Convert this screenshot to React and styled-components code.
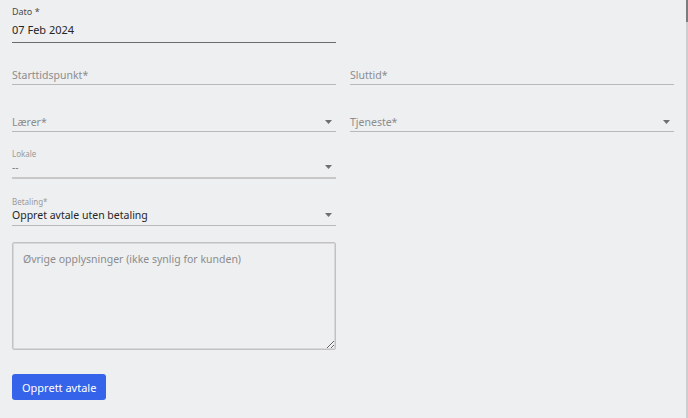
import React from "react";
import styled, { createGlobalStyle } from "styled-components";

const GlobalStyle = createGlobalStyle`
    html, body {
        margin: 0;
        padding: 0;
        background: #eeeff1;
    }
    body {
        font-family: "Noto Sans", "DejaVu Sans", sans-serif;
        color: #2b2b2b;
    }
`;

function Arrow() {
    return (
        <Caret width="7" height="4" viewBox="0 0 7 4">
            <path d="M0 0h7L3.5 4z" fill="#6f6f6f" />
        </Caret>
    );
}

function App() {
    return (
        <>
            <GlobalStyle />
            <Page>
                <Grid>
                    <Row $h={38}>
                        <Field>
                            <Label $dark>Dato *</Label>
                            <Control $dark $lh={22} $pb={1}>
                                <Value>07 Feb 2024</Value>
                            </Control>
                        </Field>
                        <div />
                    </Row>
                    <Row $h={42}>
                        <Field>
                            <Control $lh={18}>
                                <Placeholder>Starttidspunkt*</Placeholder>
                            </Control>
                        </Field>
                        <Field>
                            <Control $lh={18}>
                                <Placeholder>Sluttid*</Placeholder>
                            </Control>
                        </Field>
                    </Row>
                    <Row $h={47}>
                        <Field>
                            <Control $lh={18}>
                                <Placeholder>Lærer*</Placeholder>
                                <Arrow />
                            </Control>
                        </Field>
                        <Field>
                            <Control $lh={18}>
                                <Placeholder>Tjeneste*</Placeholder>
                                <Arrow />
                            </Control>
                        </Field>
                    </Row>
                    <Row $h={47}>
                        <Field>
                            <SmallLabel>Lokale</SmallLabel>
                            <Control $lh={14} $pb={3} $thick>
                                <Muted>--</Muted>
                                <Arrow />
                            </Control>
                        </Field>
                        <div />
                    </Row>
                    <Row $h={47}>
                        <Field>
                            <SmallLabel>Betaling*</SmallLabel>
                            <Control $lh={14} $pb={3}>
                                <Value $size={10.5}>Oppret avtale uten betaling</Value>
                                <Arrow />
                            </Control>
                        </Field>
                        <div />
                    </Row>
                </Grid>
                <Notes placeholder="Øvrige opplysninger (ikke synlig for kunden)" />
                <SubmitButton>Opprett avtale</SubmitButton>
            </Page>
            <ScrollEdge>
                <ScrollThumb />
            </ScrollEdge>
        </>
    );
}

const Page = styled.div`
    display: flex;
    flex-direction: column;
    align-items: flex-start;
    width: 674px;
    height: 418px;
    box-sizing: border-box;
    padding: 5px 0 0 12px;
`;

const Grid = styled.div`
    display: flex;
    flex-direction: column;
    width: 662px;
`;

const Row = styled.div`
    display: grid;
    grid-template-columns: 324px 324px;
    column-gap: 14px;
    height: ${(p) => p.$h}px;
    align-items: end;
`;

const Field = styled.div`
    display: flex;
    flex-direction: column;
`;

const Label = styled.div`
    font-size: 9px;
    line-height: 14px;
    color: ${(p) => (p.$dark ? "#4a4a4a" : "#8f8f8f")};
`;

const SmallLabel = styled.div`
    font-size: 8px;
    line-height: 12px;
    color: #9a9a9a;
`;

const Control = styled.div`
    position: relative;
    display: flex;
    align-items: center;
    justify-content: space-between;
    line-height: ${(p) => p.$lh}px;
    padding-bottom: ${(p) => p.$pb || 0}px;
    border-bottom: ${(p) => (p.$thick ? 2 : 1)}px solid
        ${(p) => (p.$dark ? "#6b6b6b" : p.$thick ? "#c8c8c8" : "#b9b9b9")};
`;

const Value = styled.span`
    font-size: ${(p) => p.$size || 11}px;
    color: #262626;
`;

const Placeholder = styled.span`
    font-size: 10.5px;
    color: #8c8c8c;
`;

const Muted = styled.span`
    font-size: 10px;
    color: #7a7a7a;
`;

const Caret = styled.svg`
    margin-right: 4px;
    flex: none;
`;

const Notes = styled.textarea`
    margin-top: 16px;
    width: 324px;
    height: 108px;
    box-sizing: border-box;
    padding: 9px 10px;
    border: 1px solid #c2c2c2;
    border-radius: 2px;
    box-shadow: inset 0 0 0 1px #d8d8d8;
    background: transparent;
    font-family: "Noto Sans", "DejaVu Sans", sans-serif;
    font-size: 10.5px;
    color: #333;
    outline: none;

    &::placeholder {
        color: #8c8c8c;
    }
`;

const SubmitButton = styled.button`
    margin-top: 24px;
    height: 26px;
    padding: 0 10px;
    border: none;
    border-radius: 3px;
    background: #3563e9;
    color: #ffffff;
    font-family: "Noto Sans", "DejaVu Sans", sans-serif;
    font-size: 11px;
    cursor: pointer;
`;

const ScrollEdge = styled.div`
    position: fixed;
    top: 0;
    right: 0;
    width: 2px;
    height: 100%;
    background: #cdcdcd;
`;

const ScrollThumb = styled.div`
    height: 22px;
    background: #7c7c7c;
`;

export default App;
